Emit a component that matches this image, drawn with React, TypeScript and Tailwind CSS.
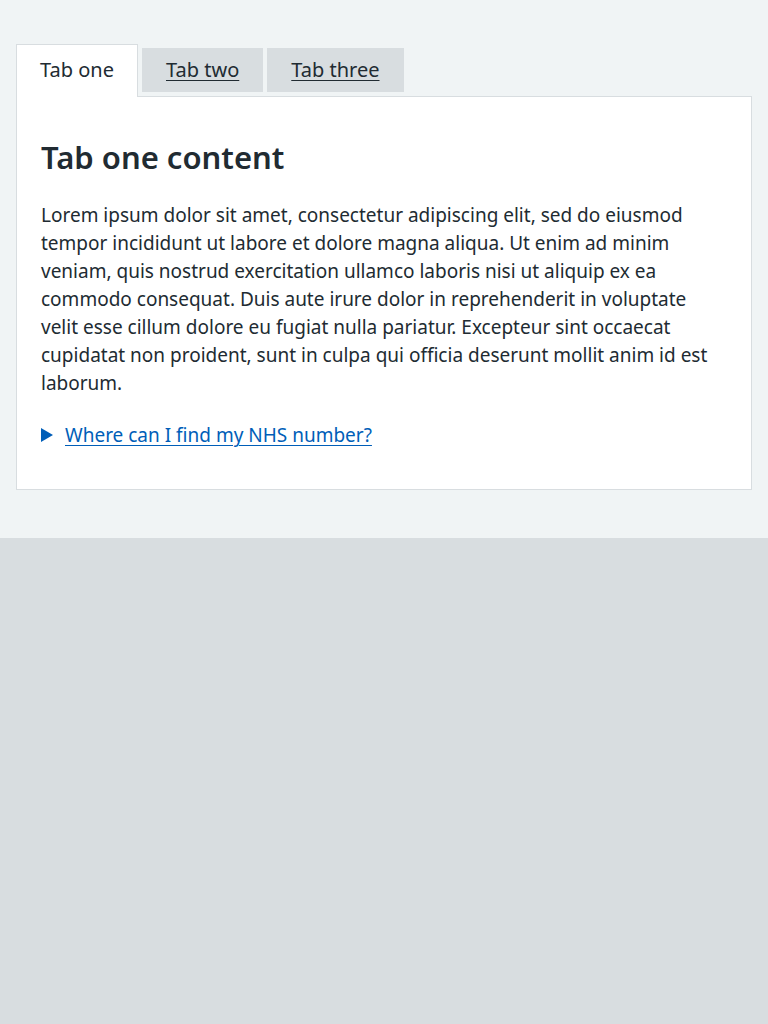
import { useState } from "react";

const tabs = [
  { id: "one", label: "Tab one" },
  { id: "two", label: "Tab two" },
  { id: "three", label: "Tab three" },
];

const lorem =
  "Lorem ipsum dolor sit amet, consectetur adipiscing elit, sed do eiusmod tempor incididunt ut labore et dolore magna aliqua. Ut enim ad minim veniam, quis nostrud exercitation ullamco laboris nisi ut aliquip ex ea commodo consequat. Duis aute irure dolor in reprehenderit in voluptate velit esse cillum dolore eu fugiat nulla pariatur. Excepteur sint occaecat cupidatat non proident, sunt in culpa qui officia deserunt mollit anim id est laborum.";

const App = () => {
  const [active, setActive] = useState("one");
  const current = tabs.find((t) => t.id === active)!;

  return (
    <div
      className="min-h-screen bg-[#d8dde0] text-[#212b32]"
      style={{ fontFamily: '"Noto Sans", Arial, sans-serif' }}
    >
      <main className="bg-[#f0f4f5] px-4 pt-11 pb-12">
        <ul className="flex items-start">
          {tabs.map((tab) =>
            tab.id === active ? (
              <li
                key={tab.id}
                className="relative z-10 -mb-px border border-b-0 border-[#d8dde0] bg-white px-[23px] pt-[11px] pb-[13px] mr-1"
              >
                <span className="block text-[20px] leading-7">{tab.label}</span>
              </li>
            ) : (
              <li key={tab.id} className="mt-1 mr-1 bg-[#d8dde0]">
                <button
                  onClick={() => setActive(tab.id)}
                  className="block px-6 py-2 text-[20px] leading-7 underline underline-offset-[3px] decoration-1"
                >
                  {tab.label}
                </button>
              </li>
            )
          )}
        </ul>
        <section className="border border-[#d8dde0] bg-white px-6 pt-10 pb-2">
          <h2 className="mb-6 text-[31px] font-semibold leading-10">{current.label} content</h2>
          <p className="mb-6 text-[19px] leading-7">{lorem}</p>
          <details className="mb-8">
            <summary className="flex cursor-pointer list-none items-center text-[19px] leading-7 text-[#005eb8]">
              <svg className="mr-3 shrink-0" width="12" height="14" viewBox="0 0 12 14">
                <path d="M0 0 L12 7 L0 14 Z" fill="#005eb8" />
              </svg>
              <span className="underline underline-offset-[3px] decoration-1">Where can I find my NHS number?</span>
            </summary>
          </details>
        </section>
      </main>
    </div>
  );
};

export default App;
